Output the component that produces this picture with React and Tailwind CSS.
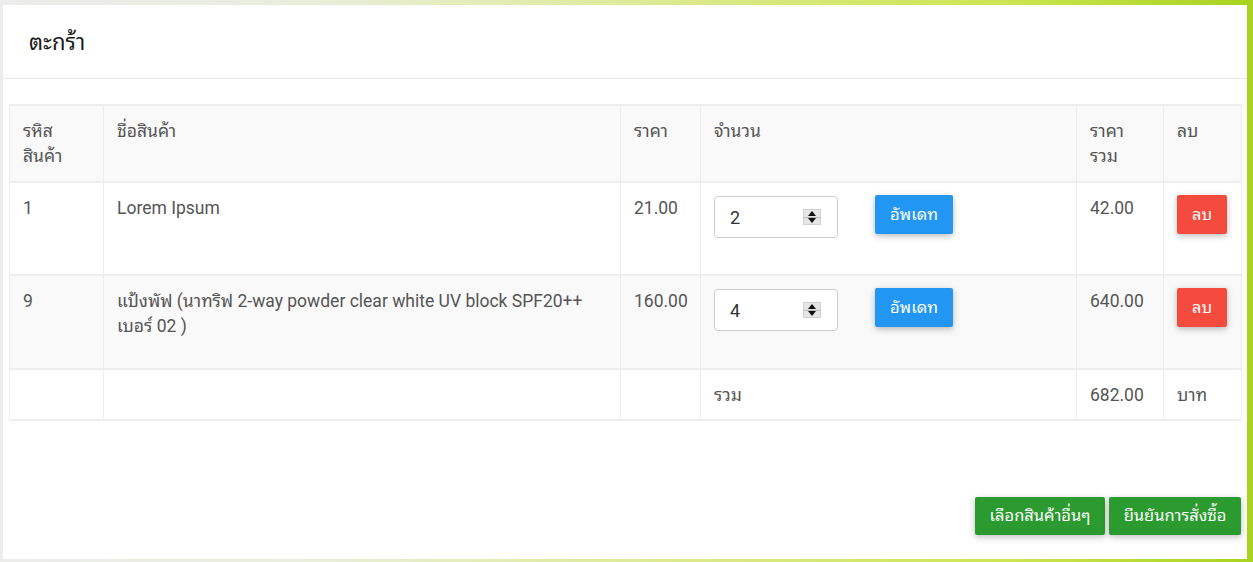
import React from "react";

const font = { fontFamily: 'Roboto, "Noto Sans Thai Looped", "Noto Sans Thai UI", Tahoma, Loma, Garuda, "Noto Sans Thai", "Noto Sans", sans-serif' };

function Spinner() {
  return (
    <div className="flex flex-col w-[18px] h-[16px] bg-[#e6e6e6] border border-[#d0d0d0]">
      <div className="flex-1 flex items-center justify-center border-b border-[#b5b5b5]">
        <svg width="8" height="5" viewBox="0 0 8 5"><path d="M0 5 L4 0 L8 5 Z" fill="#111" /></svg>
      </div>
      <div className="flex-1 flex items-center justify-center">
        <svg width="8" height="5" viewBox="0 0 8 5"><path d="M0 0 L4 5 L8 0 Z" fill="#111" /></svg>
      </div>
    </div>
  );
}

const shadow = "shadow-[0_2px_5px_rgba(0,0,0,0.16),0_2px_10px_rgba(0,0,0,0.12)]";

function QtyCell({ value }) {
  return (
    <div className="flex items-start gap-[37px]">
      <div className="w-[124px] h-[42px] border border-[#cccccc] rounded-[4px] bg-white flex items-center pl-[15px] pr-[16px]">
        <span className="flex-1 text-[18px] text-[#333]">{value}</span>
        <Spinner />
      </div>
      <button className={`w-[78px] h-[39px] -mt-[1px] bg-[#2196f3] text-white text-[16.5px] rounded-[2px] ${shadow}`}>อัพเดท</button>
    </div>
  );
}

function DelBtn() {
  return (
    <button className={`w-[50px] h-[39px] -mt-[1px] bg-[#f44b3e] text-white text-[16.5px] rounded-[2px] ${shadow}`}>ลบ</button>
  );
}

const td = "border-x border-y-2 border-[#eeeeee] px-[13px] pt-[13px] align-top text-[17.5px] leading-[25px] text-[#555]";

export default function App() {
  return (
    <div style={font} className="w-[1253px] h-[562px] bg-[linear-gradient(90deg,#ececec_0%,#e9eedb_25%,#dbe98c_55%,#cde552_80%,#a8d21f_100%)] pt-[5px] pl-[3px] pr-[6px] pb-[3px]">
      <div className="bg-white h-full flex flex-col">
        <div className="h-[74px] border-b border-[#e6e6e6] flex items-center pl-[26px]">
          <h1 className="text-[22px] text-[#1a1a1a] mt-[2px]">ตะกร้า</h1>
        </div>
        <div className="px-[6px] pt-[25px]">
          <table className="w-[1232px] table-fixed border-collapse">
            <colgroup>
              <col className="w-[94px]" />
              <col className="w-[517px]" />
              <col className="w-[80px]" />
              <col className="w-[376px]" />
              <col className="w-[87px]" />
              <col className="w-[78px]" />
            </colgroup>
            <thead>
              <tr className="bg-[#f9f9f9] h-[77px]">
                <th className={`${td} font-normal text-left`}>รหิส<br />สินค้า</th>
                <th className={`${td} font-normal text-left`}>ชื่อสินค้า</th>
                <th className={`${td} font-normal text-left`}>ราคา</th>
                <th className={`${td} font-normal text-left`}>จำนวน</th>
                <th className={`${td} font-normal text-left`}>ราคา<br />รวม</th>
                <th className={`${td} font-normal text-left`}>ลบ</th>
              </tr>
            </thead>
            <tbody>
              <tr className="bg-white h-[93px]">
                <td className={td}>1</td>
                <td className={td}>Lorem Ipsum</td>
                <td className={td}>21.00</td>
                <td className={td}><QtyCell value="2" /></td>
                <td className={td}>42.00</td>
                <td className={td}><DelBtn /></td>
              </tr>
              <tr className="bg-[#f9f9f9] h-[94px]">
                <td className={td}>9</td>
                <td className={td}>แป้งพัฟ (นาทริฟ 2-way powder clear white UV block SPF20++<br />เบอร์ 02 )</td>
                <td className={td}>160.00</td>
                <td className={td}><QtyCell value="4" /></td>
                <td className={td}>640.00</td>
                <td className={td}><DelBtn /></td>
              </tr>
              <tr className="bg-white h-[51px]">
                <td className={td}></td>
                <td className={td}></td>
                <td className={td}></td>
                <td className={td}>รวม</td>
                <td className={td}>682.00</td>
                <td className={td}>บาท</td>
              </tr>
            </tbody>
          </table>
        </div>
        <div className="flex-1" />
        <div className="flex justify-end gap-[4px] pr-[6px] pb-[24px]">
          <button className={`w-[130px] h-[38px] bg-[#2b9a2f] text-white text-[16.5px] rounded-[2px] ${shadow}`}>เลือกสินค้าอื่นๆ</button>
          <button className={`w-[132px] h-[38px] bg-[#2b9a2f] text-white text-[16.5px] rounded-[2px] ${shadow}`}>ยืนยันการสั่งซื้อ</button>
        </div>
      </div>
    </div>
  );
}
